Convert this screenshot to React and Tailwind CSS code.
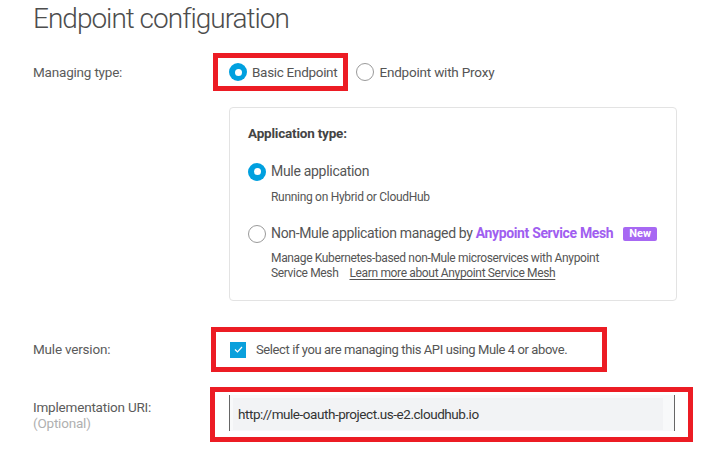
import React from "react";

const Radio = ({ checked }) =>
  checked ? (
    <span className="w-[18px] h-[18px] rounded-full bg-[#00a0df] flex items-center justify-center shrink-0">
      <span className="w-[7px] h-[7px] rounded-full bg-white" />
    </span>
  ) : (
    <span className="w-[18px] h-[18px] rounded-full border border-[#9a9a9a] bg-white shrink-0" />
  );

export default function App() {
  return (
    <div className="w-[725px] h-[454px] bg-white text-[#5b5b5b] overflow-hidden whitespace-nowrap" style={{ fontFamily: "Roboto, 'Open Sans', sans-serif" }}>
      <div className="pl-[33px]">
        <h1 className="font-light text-[28px] leading-[34px] pt-[2px] text-[#4d4d4d] tracking-[-1px]">
          Endpoint configuration
        </h1>

        {/* Managing type */}
        <div className="flex items-center mt-[17px]">
          <div className="w-[180px] text-[13.5px] tracking-[-0.2px]">Managing type:</div>
          <div className="flex items-center border-[5px] border-[#ec1c24] h-[38px] pl-[11px] pr-[6px] gap-[5px]">
            <Radio checked />
            <span className="text-[13.5px] text-[#555] tracking-[-0.3px]">Basic Endpoint</span>
          </div>
          <div className="flex items-center ml-[8px] gap-[5px]">
            <Radio />
            <span className="text-[13.5px] text-[#555] tracking-[-0.2px]">Endpoint with Proxy</span>
          </div>
        </div>

        {/* Application type card */}
        <div className="ml-[196px] mt-[16px] w-[448px] h-[194px] border border-[#e3e3e3] rounded-[4px] pl-[18px] pt-[15px]">
          <div className="font-bold text-[13.5px] text-[#444] tracking-[-0.2px]">Application type:</div>
          <div className="flex items-center gap-[5px] mt-[18px]">
            <Radio checked />
            <span className="text-[14px] text-[#555] tracking-[-0.3px]">Mule application</span>
          </div>
          <div className="pl-[23px] text-[12px] text-[#555] mt-[6px] tracking-[-0.3px]">Running on Hybrid or CloudHub</div>
          <div className="flex items-center gap-[5px] mt-[17px]">
            <Radio />
            <span className="text-[14px] text-[#555] tracking-[-0.35px]">
              Non-Mule application managed by{" "}
              <span className="font-bold text-[#a05ef0]">Anypoint Service Mesh</span>
            </span>
            <span className="ml-[5px] bg-[#a768f3] text-white font-bold text-[11px] leading-[14px] px-[6px] rounded-[2px]">New</span>
          </div>
          <div className="pl-[23px] text-[12px] leading-[15px] text-[#555] mt-[7px] tracking-[-0.35px]">
            <div>Manage Kubernetes-based non-Mule microservices with Anypoint</div>
            <div>
              Service Mesh
              <span className="ml-[11px] underline underline-offset-2">Learn more about Anypoint Service Mesh</span>
            </div>
          </div>
        </div>

        {/* Mule version */}
        <div className="flex items-center mt-[26px]">
          <div className="w-[178px] text-[13.5px] tracking-[-0.2px]">Mule version:</div>
          <div className="flex items-center border-[5px] border-[#ec1c24] h-[45px] w-[396px] pl-[14px] gap-[10px]">
            <span className="w-[16px] h-[16px] bg-[#0aa0dc] flex items-center justify-center">
              <svg width="9" height="7" viewBox="0 0 9 7" fill="none">
                <path d="M1 3.5 L3.5 6 L8 1" stroke="white" strokeWidth="1.2" />
              </svg>
            </span>
            <span className="text-[13px] text-[#555] tracking-[-0.4px]">
              Select if you are managing this API using Mule 4 or above.
            </span>
          </div>
        </div>

        {/* Implementation URI */}
        <div className="flex items-start mt-[15px]">
          <div className="w-[177px] text-[13.5px] leading-[16px] pt-[12px] tracking-[-0.2px]">
            <div>Implementation URI:</div>
            <div className="text-[#b0b0b0]">(Optional)</div>
          </div>
          <div className="border-[5px] border-[#ec1c24] h-[55px] w-[483px] pl-[14px] pt-[3px]">
            <div className="h-[36px] w-[446px] border-l border-r border-[#666] bg-[#f8f9fa] pl-[3px] pr-[11px] pt-[3px]">
              <div className="h-[32px] bg-[#f2f3f5] flex items-center pl-[5px] text-[13.5px] text-[#333] tracking-[-0.45px]">
                http://mule-oauth-project.us-e2.cloudhub.io
              </div>
            </div>
          </div>
        </div>
      </div>
    </div>
  );
}
